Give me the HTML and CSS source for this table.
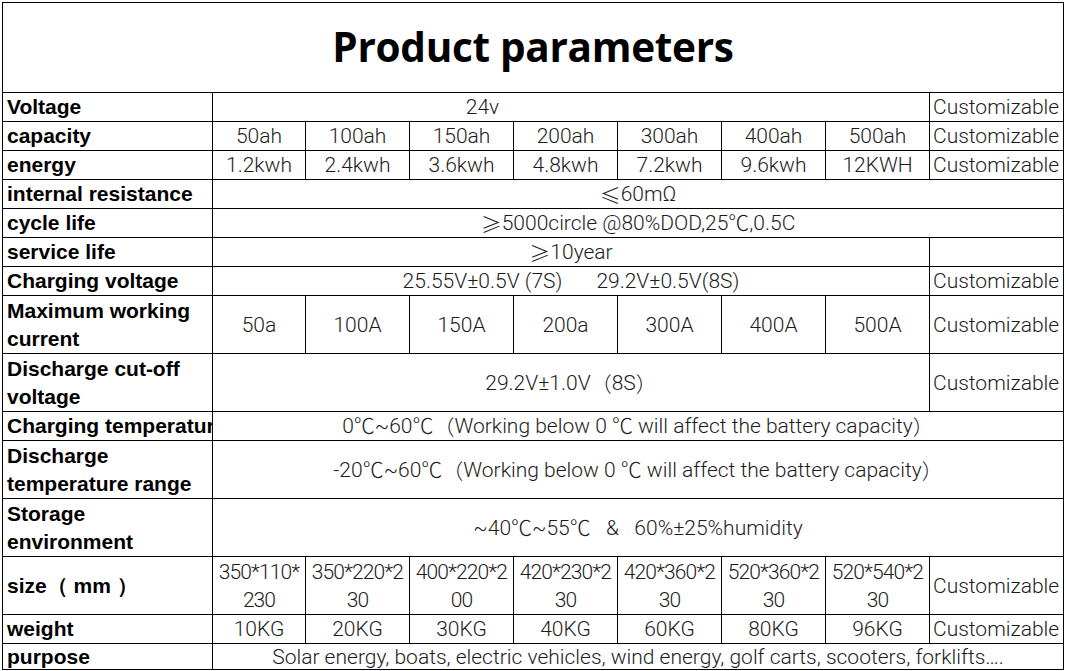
FILE: index.html
```html
<!DOCTYPE html>
<html lang="en">
<head>
<meta charset="utf-8">
<title>Product parameters</title>
<link rel="stylesheet" href="styles.css">
</head>
<body>
<div class="sheet">
<table class="params">
  <colgroup>
    <col class="c-label">
    <col class="c-first">
    <col class="c-mid"><col class="c-mid"><col class="c-mid"><col class="c-mid"><col class="c-mid"><col class="c-mid">
    <col class="c-last">
  </colgroup>
  <tbody>
    <tr class="r-title"><td colspan="9" class="title">Product parameters</td></tr>
    <tr class="r1"><th>Voltage</th><td colspan="7" class="shift">24v</td><td class="cust">Customizable</td></tr>
    <tr class="r1"><th>capacity</th><td>50ah</td><td>100ah</td><td>150ah</td><td>200ah</td><td>300ah</td><td>400ah</td><td>500ah</td><td class="cust">Customizable</td></tr>
    <tr class="r1"><th>energy</th><td>1.2kwh</td><td>2.4kwh</td><td>3.6kwh</td><td>4.8kwh</td><td>7.2kwh</td><td>9.6kwh</td><td>12KWH</td><td class="cust">Customizable</td></tr>
    <tr class="r1"><th>internal resistance</th><td colspan="8"><span class="cjk">≤</span>60mΩ</td></tr>
    <tr class="r1"><th>cycle life</th><td colspan="8"><span class="cjk">≥</span>5000circle @80%DOD,25℃,0.5C</td></tr>
    <tr class="r1"><th>service life</th><td colspan="7"><span class="cjk">≥</span>10year</td><td class="cust"></td></tr>
    <tr class="r1"><th>Charging voltage</th><td colspan="7">25.55V±0.5V (7S)<span class="gap"></span>29.2V±0.5V(8S)</td><td class="cust">Customizable</td></tr>
    <tr class="r2"><th>Maximum working current</th><td>50a</td><td>100A</td><td>150A</td><td>200a</td><td>300A</td><td>400A</td><td>500A</td><td class="cust">Customizable</td></tr>
    <tr class="r2"><th>Discharge cut-off voltage</th><td colspan="7">29.2V±1.0V<span class="cjk">（</span>8S<span class="cjk">）</span></td><td class="cust">Customizable</td></tr>
    <tr class="r1"><th class="clip">Charging temperature</th><td colspan="8">0℃~60℃<span class="cjk">（</span>Working below 0 ℃ will affect the battery capacity<span class="cjk">）</span></td></tr>
    <tr class="r2"><th>Discharge temperature range</th><td colspan="8">-20℃~60℃<span class="cjk">（</span>Working below 0 ℃ will affect the battery capacity<span class="cjk">）</span></td></tr>
    <tr class="r2"><th>Storage environment</th><td colspan="8" class="pre">~40℃~55℃   &amp;   60%±25%humidity</td></tr>
    <tr class="r2 r-size"><th>size（ mm ）</th><td>350*110*<br>230</td><td>350*220*2<br>30</td><td>400*220*2<br>00</td><td>420*230*2<br>30</td><td>420*360*2<br>30</td><td>520*360*2<br>30</td><td>520*540*2<br>30</td><td class="cust">Customizable</td></tr>
    <tr class="r1"><th>weight</th><td>10KG</td><td>20KG</td><td>30KG</td><td>40KG</td><td>60KG</td><td>80KG</td><td>96KG</td><td class="cust">Customizable</td></tr>
    <tr class="r-last"><th>purpose</th><td colspan="8">Solar energy, boats, electric vehicles, wind energy, golf carts, scooters, forklifts….</td></tr>
  </tbody>
</table>
</div>
</body>
</html>
```

FILE: styles.css
```css
html, body {
  margin: 0;
  padding: 0;
  background: #fff;
}

.sheet {
  padding: 2px 0 0 2px;
}

.params {
  border-collapse: collapse;
  table-layout: fixed;
  width: 1061px;
  border: 1px solid #000;
}

.c-label { width: 210px; }
.c-first { width: 93px; }
.c-mid { width: 104px; }
.c-last { width: 134px; }

.params th,
.params td {
  border: 1px solid #000;
  padding: 0;
  overflow: hidden;
}

.params th {
  font-family: "Liberation Sans", Arial, sans-serif;
  font-weight: bold;
  font-size: 21px;
  line-height: 28px;
  color: #000;
  text-align: left;
  padding-left: 4px;
  vertical-align: middle;
}

.params td {
  font-family: Roboto, "Noto Sans CJK SC", sans-serif;
  font-weight: 300;
  font-size: 21px;
  line-height: 28px;
  color: #1c1c1c;
  text-align: center;
  vertical-align: middle;
  white-space: nowrap;
}

.r-title { height: 90px; }
.r1 { height: 29px; }
.r2 { height: 58px; }
.r-last { height: 26px; }
.r-last th, .r-last td { line-height: 24px; }

.params td.title {
  font-family: "Open Sans", "Noto Sans", sans-serif;
  font-weight: 700;
  font-size: 40.5px;
  color: #000;
  line-height: 1;
  letter-spacing: -0.3px;
}

.params td.cust {
  text-align: left;
  padding-left: 3px;
  letter-spacing: 0;
}

.params td.shift {
  padding-right: 177px;
}

.params th.clip {
  white-space: nowrap;
  text-overflow: clip;
}

.params td.pre {
  white-space: pre;
}

.r-size td {
  letter-spacing: -0.9px;
}

.cjk {
  font-family: "Noto Sans CJK SC", sans-serif;
  vertical-align: top;
}

.gap {
  display: inline-block;
  width: 34px;
}
```
